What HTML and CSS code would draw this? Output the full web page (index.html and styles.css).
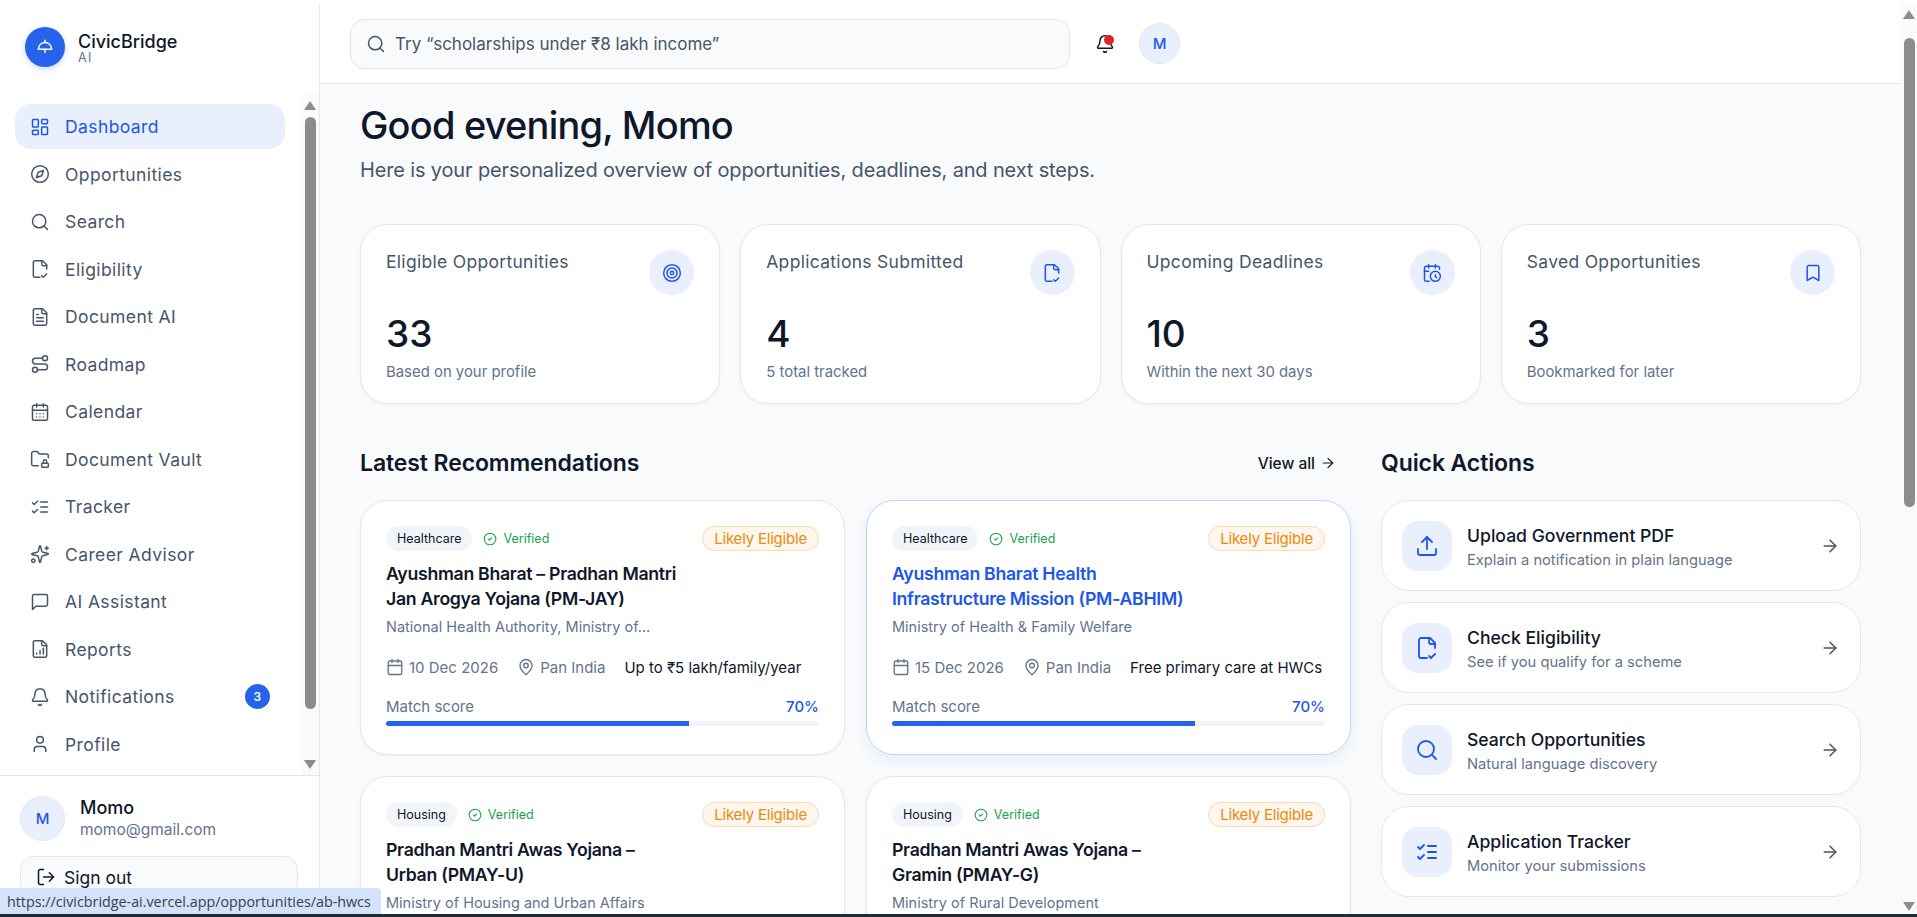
FILE: index.html
```html
<!DOCTYPE html>
<html lang="en">
<head>
  <meta charset="UTF-8">
  <title>CivicBridge AI</title>
  <link rel="stylesheet" href="styles.css">
</head>
<body>

  <!-- shared icons -->
  <svg class="sprite" xmlns="http://www.w3.org/2000/svg">
    <symbol id="i-dashboard" viewBox="0 0 24 24"><rect x="3" y="3" width="7" height="9" rx="1"/><rect x="14" y="3" width="7" height="5" rx="1"/><rect x="14" y="12" width="7" height="9" rx="1"/><rect x="3" y="16" width="7" height="5" rx="1"/></symbol>
    <symbol id="i-compass" viewBox="0 0 24 24"><circle cx="12" cy="12" r="10"/><path d="M16.24 7.76l-2.12 6.36-6.36 2.12 2.12-6.36z"/></symbol>
    <symbol id="i-search" viewBox="0 0 24 24"><circle cx="11" cy="11" r="8"/><path d="m21 21-4.3-4.3"/></symbol>
    <symbol id="i-filecheck" viewBox="0 0 24 24"><path d="M14 2v4a2 2 0 0 0 2 2h4"/><path d="M20 12V7l-5-5H6a2 2 0 0 0-2 2v16a2 2 0 0 0 2 2h6"/><path d="m14 20 2 2 4-4"/></symbol>
    <symbol id="i-filetext" viewBox="0 0 24 24"><path d="M15 2H6a2 2 0 0 0-2 2v16a2 2 0 0 0 2 2h12a2 2 0 0 0 2-2V7Z"/><path d="M14 2v4a2 2 0 0 0 2 2h4"/><path d="M10 9H8"/><path d="M16 13H8"/><path d="M16 17H8"/></symbol>
    <symbol id="i-route" viewBox="0 0 24 24"><circle cx="6" cy="19" r="3"/><path d="M9 19h8.5a3.5 3.5 0 0 0 0-7h-11a3.5 3.5 0 0 1 0-7H15"/><circle cx="18" cy="5" r="3"/></symbol>
    <symbol id="i-calendardays" viewBox="0 0 24 24"><path d="M8 2v4"/><path d="M16 2v4"/><rect x="3" y="4" width="18" height="18" rx="2"/><path d="M3 10h18"/><path d="M8 14h.01"/><path d="M12 14h.01"/><path d="M16 14h.01"/><path d="M8 18h.01"/><path d="M12 18h.01"/><path d="M16 18h.01"/></symbol>
    <symbol id="i-folderlock" viewBox="0 0 24 24"><rect x="14" y="17" width="8" height="5" rx="1"/><path d="M10 20H4a2 2 0 0 1-2-2V5a2 2 0 0 1 2-2h3.9a2 2 0 0 1 1.69.9l.81 1.2a2 2 0 0 0 1.67.9H20a2 2 0 0 1 2 2v2.5"/><path d="M20 17v-2a2 2 0 1 0-4 0v2"/></symbol>
    <symbol id="i-listchecks" viewBox="0 0 24 24"><path d="m3 17 2 2 4-4"/><path d="m3 7 2 2 4-4"/><path d="M13 6h8"/><path d="M13 12h8"/><path d="M13 18h8"/></symbol>
    <symbol id="i-sparkles" viewBox="0 0 24 24"><path d="M9.937 15.5A2 2 0 0 0 8.5 14.063l-6.135-1.582a.5.5 0 0 1 0-.962L8.5 9.936A2 2 0 0 0 9.937 8.5l1.582-6.135a.5.5 0 0 1 .963 0L14.063 8.5A2 2 0 0 0 15.5 9.937l6.135 1.581a.5.5 0 0 1 0 .964L15.5 14.063a2 2 0 0 0-1.437 1.437l-1.582 6.135a.5.5 0 0 1-.963 0z"/><path d="M20 3v4"/><path d="M22 5h-4"/><circle cx="4" cy="20" r="2"/></symbol>
    <symbol id="i-message" viewBox="0 0 24 24"><path d="M21 15a2 2 0 0 1-2 2H7l-4 4V5a2 2 0 0 1 2-2h14a2 2 0 0 1 2 2z"/></symbol>
    <symbol id="i-filechart" viewBox="0 0 24 24"><path d="M15 2H6a2 2 0 0 0-2 2v16a2 2 0 0 0 2 2h12a2 2 0 0 0 2-2V7Z"/><path d="M14 2v4a2 2 0 0 0 2 2h4"/><path d="M8 18v-1"/><path d="M12 18v-4"/><path d="M16 18v-7"/></symbol>
    <symbol id="i-bell" viewBox="0 0 24 24"><path d="M10.268 21a2 2 0 0 0 3.464 0"/><path d="M3.262 15.326A1 1 0 0 0 4 17h16a1 1 0 0 0 .74-1.673C19.41 13.956 18 12.499 18 8A6 6 0 0 0 6 8c0 4.499-1.411 5.956-2.738 7.326"/></symbol>
    <symbol id="i-user" viewBox="0 0 24 24"><path d="M19 21v-2a4 4 0 0 0-4-4H9a4 4 0 0 0-4 4v2"/><circle cx="12" cy="7" r="4"/></symbol>
    <symbol id="i-logout" viewBox="0 0 24 24"><path d="M9 21H5a2 2 0 0 1-2-2V5a2 2 0 0 1 2-2h4"/><path d="m16 17 5-5-5-5"/><path d="M21 12H9"/></symbol>
    <symbol id="i-target" viewBox="0 0 24 24"><circle cx="12" cy="12" r="10"/><circle cx="12" cy="12" r="6"/><circle cx="12" cy="12" r="2"/></symbol>
    <symbol id="i-calendarclock" viewBox="0 0 24 24"><path d="M21 7.5V6a2 2 0 0 0-2-2H5a2 2 0 0 0-2 2v14a2 2 0 0 0 2 2h3.5"/><path d="M16 2v4"/><path d="M8 2v4"/><path d="M3 10h5"/><path d="M17.5 17.5 16 16.3V14"/><circle cx="16" cy="16" r="6"/></symbol>
    <symbol id="i-bookmark" viewBox="0 0 24 24"><path d="m19 21-7-4-7 4V5a2 2 0 0 1 2-2h10a2 2 0 0 1 2 2v16z"/></symbol>
    <symbol id="i-arrow" viewBox="0 0 24 24"><path d="M5 12h14"/><path d="m12 5 7 7-7 7"/></symbol>
    <symbol id="i-upload" viewBox="0 0 24 24"><path d="M21 15v4a2 2 0 0 1-2 2H5a2 2 0 0 1-2-2v-4"/><path d="m17 8-5-5-5 5"/><path d="M12 3v12"/></symbol>
    <symbol id="i-check" viewBox="0 0 24 24"><circle cx="12" cy="12" r="10"/><path d="m9 12 2 2 4-4"/></symbol>
    <symbol id="i-pin" viewBox="0 0 24 24"><path d="M20 10c0 4.993-5.539 10.193-7.399 11.799a1 1 0 0 1-1.202 0C9.539 20.193 4 14.993 4 10a8 8 0 0 1 16 0"/><circle cx="12" cy="10" r="3"/></symbol>
    <symbol id="i-calendar" viewBox="0 0 24 24"><path d="M8 2v4"/><path d="M16 2v4"/><rect x="3" y="4" width="18" height="18" rx="2"/><path d="M3 10h18"/></symbol>
  </svg>

  <div class="app">

    <!-- Sidebar -->
    <aside class="sidebar">
      <div class="brand">
        <div class="brand-logo">
          <svg class="icon" viewBox="0 0 24 24"><path d="M3 15c.5-5 4-9 9-9s8.500 4 9 9z"/><path d="M12 15v4"/><path d="M12 3v3"/></svg>
        </div>
        <div>
          <div class="brand-name">CivicBridge</div>
          <div class="brand-sub">AI</div>
        </div>
      </div>

      <div class="nav-wrap">
        <nav class="nav">
          <a class="nav-item active"><svg class="icon"><use href="#i-dashboard"/></svg>Dashboard</a>
          <a class="nav-item"><svg class="icon"><use href="#i-compass"/></svg>Opportunities</a>
          <a class="nav-item"><svg class="icon"><use href="#i-search"/></svg>Search</a>
          <a class="nav-item"><svg class="icon"><use href="#i-filecheck"/></svg>Eligibility</a>
          <a class="nav-item"><svg class="icon"><use href="#i-filetext"/></svg>Document AI</a>
          <a class="nav-item"><svg class="icon"><use href="#i-route"/></svg>Roadmap</a>
          <a class="nav-item"><svg class="icon"><use href="#i-calendardays"/></svg>Calendar</a>
          <a class="nav-item"><svg class="icon"><use href="#i-folderlock"/></svg>Document Vault</a>
          <a class="nav-item"><svg class="icon"><use href="#i-listchecks"/></svg>Tracker</a>
          <a class="nav-item"><svg class="icon"><use href="#i-sparkles"/></svg>Career Advisor</a>
          <a class="nav-item"><svg class="icon"><use href="#i-message"/></svg>AI Assistant</a>
          <a class="nav-item"><svg class="icon"><use href="#i-filechart"/></svg>Reports</a>
          <a class="nav-item"><svg class="icon"><use href="#i-bell"/></svg>Notifications<span class="nav-badge">3</span></a>
          <a class="nav-item"><svg class="icon"><use href="#i-user"/></svg>Profile</a>
        </nav>
        <div class="scrollbar nav-scroll">
          <span class="arrow-up"></span>
          <span class="thumb"></span>
          <span class="arrow-down"></span>
        </div>
      </div>

      <div class="account">
        <div class="account-row">
          <div class="avatar">M</div>
          <div class="account-text">
            <div class="account-name">Momo</div>
            <div class="account-mail">momo@gmail.com</div>
          </div>
        </div>
        <button class="signout"><svg class="icon"><use href="#i-logout"/></svg>Sign out</button>
      </div>
    </aside>

    <!-- Main -->
    <div class="main">
      <header class="topbar">
        <div class="searchbox">
          <svg class="icon"><use href="#i-search"/></svg>
          <span>Try “scholarships under ₹8 lakh income”</span>
        </div>
        <div class="bell">
          <svg class="icon"><use href="#i-bell"/></svg>
          <span class="bell-dot"></span>
        </div>
        <div class="avatar avatar-top">M</div>
      </header>

      <main class="content">
        <h1>Good evening, Momo</h1>
        <p class="lead">Here is your personalized overview of opportunities, deadlines, and next steps.</p>

        <section class="stats">
          <div class="stat">
            <div class="stat-head">
              <span class="stat-label">Eligible Opportunities</span>
              <span class="stat-icon"><svg class="icon"><use href="#i-target"/></svg></span>
            </div>
            <div class="stat-value">33</div>
            <div class="stat-note">Based on your profile</div>
          </div>
          <div class="stat">
            <div class="stat-head">
              <span class="stat-label">Applications Submitted</span>
              <span class="stat-icon"><svg class="icon"><use href="#i-filecheck"/></svg></span>
            </div>
            <div class="stat-value">4</div>
            <div class="stat-note">5 total tracked</div>
          </div>
          <div class="stat">
            <div class="stat-head">
              <span class="stat-label">Upcoming Deadlines</span>
              <span class="stat-icon"><svg class="icon"><use href="#i-calendarclock"/></svg></span>
            </div>
            <div class="stat-value">10</div>
            <div class="stat-note">Within the next 30 days</div>
          </div>
          <div class="stat">
            <div class="stat-head">
              <span class="stat-label">Saved Opportunities</span>
              <span class="stat-icon"><svg class="icon"><use href="#i-bookmark"/></svg></span>
            </div>
            <div class="stat-value">3</div>
            <div class="stat-note">Bookmarked for later</div>
          </div>
        </section>

        <section class="columns">
          <div>
            <div class="section-head">
              <h2>Latest Recommendations</h2>
              <a class="view-all">View all <svg class="icon"><use href="#i-arrow"/></svg></a>
            </div>
            <div class="rec-grid">

              <article class="rec">
                <div class="rec-top">
                  <span class="chip">Healthcare</span>
                  <span class="verified"><svg class="icon"><use href="#i-check"/></svg>Verified</span>
                  <span class="likely">Likely Eligible</span>
                </div>
                <h3>Ayushman Bharat – Pradhan Mantri Jan Arogya Yojana (PM-JAY)</h3>
                <p class="org">National Health Authority, Ministry of...</p>
                <div class="meta">
                  <span><svg class="icon"><use href="#i-calendar"/></svg>10 Dec 2026</span>
                  <span><svg class="icon"><use href="#i-pin"/></svg>Pan India</span>
                  <span class="benefit">Up to ₹5 lakh/family/year</span>
                </div>
                <div class="score"><span>Match score</span><span class="score-num">70%</span></div>
                <div class="bar"><div class="bar-fill" style="width: 70%"></div></div>
              </article>

              <article class="rec rec-hover">
                <div class="rec-top">
                  <span class="chip">Healthcare</span>
                  <span class="verified"><svg class="icon"><use href="#i-check"/></svg>Verified</span>
                  <span class="likely">Likely Eligible</span>
                </div>
                <h3>Ayushman Bharat Health Infrastructure Mission (PM-ABHIM)</h3>
                <p class="org">Ministry of Health &amp; Family Welfare</p>
                <div class="meta">
                  <span><svg class="icon"><use href="#i-calendar"/></svg>15 Dec 2026</span>
                  <span><svg class="icon"><use href="#i-pin"/></svg>Pan India</span>
                  <span class="benefit">Free primary care at HWCs</span>
                </div>
                <div class="score"><span>Match score</span><span class="score-num">70%</span></div>
                <div class="bar"><div class="bar-fill" style="width: 70%"></div></div>
              </article>

              <article class="rec">
                <div class="rec-top">
                  <span class="chip">Housing</span>
                  <span class="verified"><svg class="icon"><use href="#i-check"/></svg>Verified</span>
                  <span class="likely">Likely Eligible</span>
                </div>
                <h3>Pradhan Mantri Awas Yojana – Urban (PMAY-U)</h3>
                <p class="org">Ministry of Housing and Urban Affairs</p>
              </article>

              <article class="rec">
                <div class="rec-top">
                  <span class="chip">Housing</span>
                  <span class="verified"><svg class="icon"><use href="#i-check"/></svg>Verified</span>
                  <span class="likely">Likely Eligible</span>
                </div>
                <h3>Pradhan Mantri Awas Yojana – Gramin (PMAY-G)</h3>
                <p class="org">Ministry of Rural Development</p>
              </article>

            </div>
          </div>

          <div>
            <div class="section-head">
              <h2>Quick Actions</h2>
            </div>
            <div class="actions">
              <a class="action">
                <span class="action-icon"><svg class="icon"><use href="#i-upload"/></svg></span>
                <span class="action-text"><strong>Upload Government PDF</strong><small>Explain a notification in plain language</small></span>
                <svg class="icon action-arrow"><use href="#i-arrow"/></svg>
              </a>
              <a class="action">
                <span class="action-icon"><svg class="icon"><use href="#i-filecheck"/></svg></span>
                <span class="action-text"><strong>Check Eligibility</strong><small>See if you qualify for a scheme</small></span>
                <svg class="icon action-arrow"><use href="#i-arrow"/></svg>
              </a>
              <a class="action">
                <span class="action-icon"><svg class="icon"><use href="#i-search"/></svg></span>
                <span class="action-text"><strong>Search Opportunities</strong><small>Natural language discovery</small></span>
                <svg class="icon action-arrow"><use href="#i-arrow"/></svg>
              </a>
              <a class="action">
                <span class="action-icon"><svg class="icon"><use href="#i-listchecks"/></svg></span>
                <span class="action-text"><strong>Application Tracker</strong><small>Monitor your submissions</small></span>
                <svg class="icon action-arrow"><use href="#i-arrow"/></svg>
              </a>
            </div>
          </div>
        </section>
      </main>
    </div>

    <div class="scrollbar page-scroll">
      <span class="arrow-up"></span>
      <span class="thumb"></span>
      <span class="arrow-down"></span>
    </div>
  </div>

  <div class="taskbar"></div>
  <div class="status-url">https://civicbridge-ai.vercel.app/opportunities/ab-hwcs</div>

</body>
</html>
```

FILE: styles.css
```css
* {
  box-sizing: border-box;
}

html, body {
  height: 100%;
}

body {
  margin: 0;
  display: flex;
  flex-direction: column;
  overflow: hidden;
  font-family: Inter, "Noto Sans", sans-serif;
  color: #0f172a;
  background: #fff;
  border-top: 4px solid #fff;
  position: relative;
}

body::before {
  content: "";
  position: absolute;
  top: -1px;
  left: 0;
  right: 0;
  height: 1px;
  background: #e2e5ea;
}

.sprite {
  display: none;
}

.icon {
  width: 20px;
  height: 20px;
  fill: none;
  stroke: currentColor;
  stroke-width: 1.8;
  stroke-linecap: round;
  stroke-linejoin: round;
  flex: none;
}

.app {
  flex: 1;
  display: flex;
  min-height: 0;
}

.taskbar {
  height: 3px;
  background: #1f2b33;
}

.status-url {
  position: absolute;
  left: 0;
  bottom: 3px;
  width: 381px;
  height: 26px;
  padding: 4px 0 0 7px;
  background: #d3e3fd;
  border-top-right-radius: 4px;
  font-family: "Open Sans", sans-serif;
  font-size: 14.300px;
  color: #3c4043;
  white-space: nowrap;
  overflow: hidden;
}

/* Scrollbars */
.scrollbar {
  display: flex;
  flex-direction: column;
  align-items: center;
  background: #fafafa;
  flex: none;
}

.thumb {
  width: 11px;
  background: #8c8c8c;
  border-radius: 6px;
}

.arrow-up, .arrow-down {
  width: 0;
  height: 0;
  border-left: 6px solid transparent;
  border-right: 6px solid transparent;
}

.arrow-up {
  border-bottom: 9px solid #8c8c8c;
}

.arrow-down {
  border-top: 9px solid #8c8c8c;
  margin-top: auto;
}

.page-scroll {
  width: 16px;
  padding: 6px 0 3px;
}

.page-scroll .thumb {
  height: 469px;
  margin-top: 19px;
}

.nav-scroll {
  position: absolute;
  top: 10px;
  right: 0;
  bottom: 0;
  width: 18px;
  padding: 7px 0 6px;
}

.nav-scroll .thumb {
  height: 592px;
  margin-top: 7px;
}

/* Sidebar */
.sidebar {
  width: 320px;
  flex: none;
  display: flex;
  flex-direction: column;
  background: #fff;
  border-right: 1px solid #e2e8f0;
  overflow: hidden;
}

.brand {
  height: 80px;
  display: flex;
  align-items: center;
  gap: 13px;
  padding: 7px 0 0 25px;
  flex: none;
}

.brand-logo {
  width: 40px;
  height: 40px;
  margin-top: -2px;
  border-radius: 50%;
  background: #2563eb;
  color: #fff;
  display: flex;
  align-items: center;
  justify-content: center;
  box-shadow: 0 2px 6px rgba(37,99,235,0.25);
}

.brand-logo .icon {
  width: 18px;
  height: 18px;
  stroke-width: 2;
}

.brand-name {
  font-size: 18px;
  font-weight: 500;
  line-height: 21px;
  color: #0f172a;
}

.brand-sub {
  font-size: 12.500px;
  line-height: 12px;
  letter-spacing: 1.5px;
  color: #64748b;
}

.nav-wrap {
  flex: 1;
  min-height: 0;
  position: relative;
}

.nav {
  display: flex;
  flex-direction: column;
  gap: 2.5px;
  padding: 20px 0 0 15px;
}

.nav-item {
  width: 270px;
  height: 45px;
  flex: none;
  display: flex;
  align-items: center;
  gap: 15px;
  padding: 0 15px;
  border-radius: 16px;
  font-size: 17.500px;
  color: #475569;
  letter-spacing: 0.4px;
}

.nav-item.active {
  background: #e9effd;
  color: #1d56e8;
}

.nav-badge {
  margin-left: auto;
  width: 25px;
  height: 25px;
  border-radius: 50%;
  background: #2563eb;
  color: #fff;
  font-size: 12px;
  font-weight: 600;
  display: flex;
  align-items: center;
  justify-content: center;
}

.account {
  flex: none;
  height: 139px;
  border-top: 1px solid #e2e8f0;
  padding: 20px 20px 0;
}

.account-row {
  display: flex;
  align-items: center;
  gap: 15px;
}

.avatar {
  width: 45px;
  height: 45px;
  border-radius: 50%;
  background: #e9effd;
  border: 1px solid #e2e8f0;
  color: #1d56e8;
  font-size: 15px;
  font-weight: 500;
  display: flex;
  align-items: center;
  justify-content: center;
  flex: none;
}

.account-name {
  font-size: 18px;
  font-weight: 500;
  line-height: 22px;
}

.account-mail {
  font-size: 15.500px;
  line-height: 22px;
  color: #64748b;
}

.signout {
  width: 278px;
  height: 42px;
  margin-top: 15px;
  display: flex;
  align-items: center;
  gap: 8px;
  padding: 0 15px;
  background: #f8fafc;
  border: 1px solid #e2e8f0;
  border-radius: 14px;
  font-family: inherit;
  font-size: 17.500px;
  color: #0f172a;
}

/* Top bar */
.main {
  flex: 1;
  min-width: 0;
  display: flex;
  flex-direction: column;
  background: #f8fafc;
}

.topbar {
  height: 80px;
  flex: none;
  display: flex;
  align-items: center;
  gap: 24px;
  padding-left: 30px;
  background: #fff;
  border-bottom: 1px solid #e2e8f0;
}

.searchbox {
  width: 720px;
  height: 50px;
  display: flex;
  align-items: center;
  gap: 9px;
  padding: 0 15px;
  background: #f8fafc;
  border: 1px solid #e2e8f0;
  border-radius: 14px;
  font-size: 17px;
  color: #475569;
}

.bell {
  width: 20px;
  height: 20px;
  position: relative;
  margin-left: 1px;
}

.bell-dot {
  position: absolute;
  top: 1px;
  right: 1px;
  width: 10px;
  height: 10px;
  border-radius: 50%;
  background: #dc2626;
}

.avatar-top {
  width: 41px;
  height: 41px;
  margin-left: 0;
}

/* Content */
.content {
  flex: 1;
  min-height: 0;
  overflow: hidden;
  padding: 17px 40px 0;
}

h1 {
  margin: 0;
  font-size: 38px;
  line-height: 48px;
  font-weight: 550;
  letter-spacing: -0.8px;
}

.lead {
  margin: 7px 0 0;
  font-size: 20px;
  line-height: 28px;
  letter-spacing: -0.15px;
  color: #475569;
}

.stats {
  display: grid;
  grid-template-columns: repeat(4, 1fr);
  gap: 20px;
  margin-top: 40px;
}

.stat {
  height: 180px;
  padding: 25px;
  background: #fff;
  border: 1px solid #e2e8f0;
  border-radius: 28px;
  box-shadow: 0 1px 3px rgba(15,23,42,0.05);
}

.stat-head {
  display: flex;
  justify-content: space-between;
  align-items: flex-start;
  height: 62px;
}

.stat-label {
  font-size: 17.500px;
  line-height: 24px;
  letter-spacing: 0.3px;
  color: #475569;
}

.stat-icon {
  width: 45px;
  height: 45px;
  border-radius: 50%;
  background: #e9effd;
  color: #1d56e8;
  display: flex;
  align-items: center;
  justify-content: center;
}

.stat-value {
  font-size: 37px;
  line-height: 44px;
  font-weight: 500;
}

.stat-note {
  margin-top: 6px;
  font-size: 14.900px;
  line-height: 20px;
  color: #64748b;
}

.columns {
  display: grid;
  grid-template-columns: minmax(0, 1fr) 480px;
  gap: 30px;
  margin-top: 40px;
}

.section-head {
  display: flex;
  align-items: center;
  justify-content: space-between;
  height: 38px;
  margin-bottom: 18px;
}

h2 {
  margin: 0;
  font-size: 23px;
  font-weight: 600;
  letter-spacing: -0.1px;
}

.view-all {
  display: flex;
  align-items: center;
  gap: 5px;
  margin-right: 15px;
  font-size: 15.500px;
  font-weight: 500;
}

.view-all .icon {
  width: 16px;
  height: 16px;
}

/* Recommendation cards */
.rec-grid {
  display: grid;
  grid-template-columns: repeat(2, minmax(0, 1fr));
  gap: 21px;
}

.rec {
  height: 255px;
  padding: 25px;
  background: #fff;
  border: 1px solid #e2e8f0;
  border-radius: 28px;
  box-shadow: 0 1px 3px rgba(15,23,42,0.05);
}

.rec-hover {
  border-color: #bfd3fb;
  box-shadow: 0 6px 14px rgba(37,99,235,0.08);
}

.rec-hover h3 {
  color: #1d56e8;
}

.rec-top {
  display: flex;
  align-items: center;
  height: 25px;
}

.chip {
  height: 25px;
  padding: 0 11px;
  display: flex;
  align-items: center;
  background: #f1f5f9;
  border-radius: 13px;
  font-size: 12.500px;
}

.verified {
  display: flex;
  align-items: center;
  gap: 6px;
  margin-left: 11px;
  font-size: 12.500px;
  color: #16a34a;
}

.verified .icon {
  width: 14px;
  height: 14px;
}

.likely {
  margin-left: auto;
  height: 25px;
  padding: 0 11px;
  display: flex;
  align-items: center;
  background: #fff7ed;
  border: 1px solid #fed7aa;
  border-radius: 13px;
  font-size: 15px;
  color: #ea8a0c;
  letter-spacing: -0.2px;
}

.rec h3 {
  margin: 10px 0 0;
  max-width: 300px;
  font-size: 17.700px;
  line-height: 25px;
  font-weight: 600;
  letter-spacing: -0.3px;
}

.org {
  margin: 6px 0 0;
  font-size: 14.500px;
  line-height: 20px;
  color: #64748b;
  white-space: nowrap;
}

.meta {
  display: flex;
  align-items: center;
  gap: 19px;
  margin-top: 20px;
  height: 20px;
  font-size: 15px;
  color: #64748b;
  white-space: nowrap;
}

.meta span {
  display: flex;
  align-items: center;
  gap: 5px;
}

.meta .icon {
  width: 18px;
  height: 18px;
}

.meta .benefit {
  color: #0f172a;
}

.score {
  display: flex;
  justify-content: space-between;
  margin-top: 20px;
  height: 20px;
  line-height: 20px;
  font-size: 15px;
  color: #64748b;
}

.score-num {
  color: #1d56e8;
  font-weight: 500;
}

.bar {
  height: 5px;
  margin-top: 4px;
  background: #f1f5f9;
  border-radius: 3px;
  overflow: hidden;
}

.bar-fill {
  height: 100%;
  background: #2563eb;
}

/* Quick actions */
.actions {
  display: flex;
  flex-direction: column;
  gap: 11px;
}

.action {
  height: 91px;
  flex: none;
  display: flex;
  align-items: center;
  gap: 15px;
  padding: 0 20px;
  background: #fff;
  border: 1px solid #e2e8f0;
  border-radius: 28px;
}

.action-icon {
  width: 50px;
  height: 50px;
  border-radius: 16px;
  background: #e9effd;
  color: #1d56e8;
  display: flex;
  align-items: center;
  justify-content: center;
  flex: none;
}

.action-icon .icon {
  width: 24px;
  height: 24px;
}

.action-text {
  flex: 1;
  display: flex;
  flex-direction: column;
  padding-top: 4px;
}

.action-text strong {
  font-size: 17.600px;
  line-height: 24px;
  font-weight: 500;
}

.action-text small {
  font-size: 14.700px;
  line-height: 24px;
  color: #64748b;
}

.action-arrow {
  width: 20px;
  height: 20px;
  color: #475569;
}
```
